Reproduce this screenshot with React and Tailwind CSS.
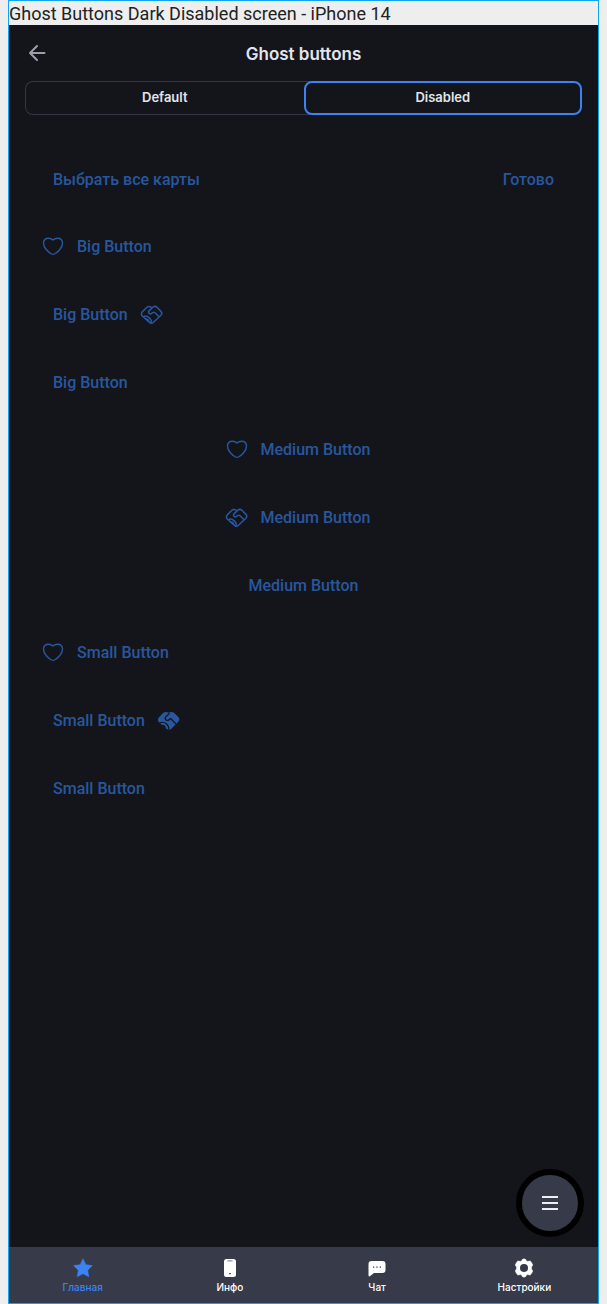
import React from "react";

function HeartIcon() {
  return (
    <svg viewBox="0 0 24 24" className="size-6 shrink-0" fill="none" stroke="currentColor" strokeWidth="1.4" strokeLinejoin="round" aria-hidden="true">
      <path d="M12 4.900C10.700 3.700 9.200 3.200 7.500 3.200C4.500 3.200 2.500 5.300 2.500 8.300C2.500 12.900 7.500 17.400 10.600 19C11.500 19.500 12.500 19.500 13.400 19C16.500 17.400 21.500 12.900 21.500 8.300C21.500 5.300 19.500 3.200 16.500 3.200C14.800 3.200 13.300 3.700 12 4.900Z" />
    </svg>
  );
}

function HandshakeIcon() {
  return (
    <svg viewBox="0 0 24 24" className="size-6 shrink-0" fill="none" stroke="currentColor" strokeWidth="1.5" strokeLinecap="round" strokeLinejoin="round" aria-hidden="true">
      <path d="M11.500 4.500C9.900 3.300 7.800 3.300 6.400 4.700L2.500 8.600C1.200 10 1.200 11.800 2.500 13.200L9.800 19.600C10.900 20.500 12.200 20.500 13.200 19.500L20.700 12.500C22.100 11.100 22.100 9.500 20.700 8.100L17.200 4.500C15.900 3.200 13.900 3.200 12.600 4.500L9 7.900C8.300 8.600 8.300 9.700 9.100 10.400C9.900 11.100 11 11 11.700 10.300L12.800 9.500C13.500 9 14.300 9.100 15 9.700L18.800 13.600" />
      <path d="M3.500 13.700C4.900 12.900 6.600 13 7.900 13.800C10.100 15.100 11.500 17.200 11.300 19.500M6.200 16C7.500 16.100 8.500 17 8.700 18.300" />
    </svg>
  );
}

function HandshakeSolidIcon() {
  return (
    <svg viewBox="0 0 24 24" className="size-6 shrink-0" aria-hidden="true">
      <path d="M6 4.100C7.700 2.700 9.900 2.700 11.700 3.700C13.500 2.700 15.900 2.700 17.500 4.200L21.300 8C22.800 9.500 22.700 11.300 21.300 12.700L14 20C12.700 21.200 10.900 21.200 9.700 20.100L2 13.300C.6 11.900 .6 9.600 2 8.200Z" fill="currentColor" />
      <path d="M12.500 4.300L8.800 7.900C8 8.800 8 10 8.900 10.800C9.800 11.600 11.200 11.500 12 10.800L13.600 9.500L19 15M2.600 13.800C5.300 12.800 7.500 13.200 9.300 14.700C11.300 16.300 12 18.300 11.700 20.900M5.500 16.400C7 16.400 8 17.300 8.200 18.800" fill="none" stroke="#14151a" strokeWidth="1.200" strokeLinejoin="round" />
    </svg>
  );
}

const rows = [
  { align: "start", label: "Big Button", left: HeartIcon },
  { align: "start", label: "Big Button", right: HandshakeIcon },
  { align: "start", label: "Big Button" },
  { align: "center", label: "Medium Button", left: HeartIcon },
  { align: "center", label: "Medium Button", left: HandshakeIcon },
  { align: "center", label: "Medium Button" },
  { align: "start", label: "Small Button", left: HeartIcon },
  { align: "start", label: "Small Button", right: HandshakeSolidIcon },
  { align: "start", label: "Small Button" },
];

function GhostButton({ label, left: Left, right: Right }) {
  const height = Left || Right ? "h-11" : "h-[43px]";
  return (
    <button type="button" disabled className={`flex items-center text-base font-medium text-[#28579f] ${height}`}>
      {Left && <Left />}
      <span className="px-3">{label}</span>
      {Right && <Right />}
    </button>
  );
}

const tabs = [
  {
    label: "Главная",
    active: true,
    icon: <path d="M10 .8L12.900 6.700L19.400 7.600L14.700 12.200L15.800 18.700L10 15.700L4.200 18.700L5.300 12.200L.6 7.600L7.100 6.700Z" fill="currentColor" stroke="currentColor" strokeWidth=".5" strokeLinejoin="round" />,
  },
  {
    label: "Инфо",
    icon: (
      <>
        <rect x="4" y="1" width="12" height="18" rx="2.500" fill="currentColor" />
        <rect x="7.300" y="2.200" width="5.400" height="1.200" rx=".6" fill="#8f919b" />
        <rect x="9.200" y="15" width="1.600" height="1.300" fill="#373a49" />
      </>
    ),
  },
  {
    label: "Чат",
    icon: (
      <>
        <path d="M4.500 3H15.500C17.500 3 18.500 4 18.500 6V12C18.500 14 17.500 15 15.500 15H7L3.200 18.100C2.200 18.800 1.500 18.500 1.500 17.300V6C1.500 4 2.500 3 4.500 3Z" fill="currentColor" />
        <path d="M6 8.400H7.300V9.700H6ZM9.300 8.400H10.600V9.700H9.300ZM12.700 8.400H14V9.700H12.700Z" fill="#373a49" />
      </>
    ),
  },
  {
    label: "Настройки",
    icon: (
      <>
        <path d="M8.200 1.800C8.400 1.200 8.800 1 9.300 1H10.700C11.200 1 11.600 1.200 11.800 1.800C12.200 3 13.200 3.600 14.500 3.300L15.600 3.100C16.200 3 16.600 3.200 16.900 3.700L18.500 6.400C18.800 6.900 18.700 7.300 18.300 7.800C17 9.200 17 10.800 18.300 12.200C18.700 12.700 18.800 13.100 18.500 13.600L16.900 16.300C16.600 16.800 16.200 17 15.600 16.900L14.500 16.700C13.200 16.400 12.200 17 11.800 18.200C11.600 18.800 11.200 19 10.700 19H9.300C8.800 19 8.400 18.800 8.200 18.200C7.800 17 6.800 16.400 5.500 16.700L4.400 16.900C3.800 17 3.400 16.800 3.100 16.300L1.500 13.600C1.200 13.100 1.300 12.700 1.700 12.200C3 10.800 3 9.200 1.700 7.800C1.300 7.300 1.200 6.900 1.500 6.400L3.100 3.700C3.400 3.200 3.800 3 4.400 3.100L5.500 3.300C6.800 3.600 7.800 3 8.200 1.800Z" fill="currentColor" stroke="currentColor" strokeWidth=".6" />
        <circle cx="10" cy="10" r="4" fill="#373a49" />
      </>
    ),
  },
];

export default function App() {
  return (
    <div className="min-h-screen bg-[#eeeeee] px-2 font-['Roboto',sans-serif] flex flex-col">
      <div className="flex grow flex-col border border-[#0da5f3]">
        <p className="h-6 text-lg leading-[26px] text-[#222222]">
          Ghost Buttons Dark Disabled screen - iPhone 14
        </p>
        <div className="relative flex grow flex-col bg-[#14151a]">
          <header className="grid h-14 grid-cols-[40px_1fr_40px] items-center px-4">
            <button type="button" aria-label="Back" className="text-[#9c9faa]">
              <svg viewBox="0 0 24 24" className="size-6" fill="none" stroke="currentColor" strokeWidth="2" strokeLinecap="round" strokeLinejoin="round" aria-hidden="true">
                <path d="M19.500 12H5M12 5L5 12L12 19" />
              </svg>
            </button>
            <h1 className="pt-1 text-center font-['Inter',sans-serif] text-[17px] font-semibold text-[#e2e5ee]">Ghost buttons</h1>
          </header>

          <div className="mx-4 grid h-[34px] grid-cols-2 rounded-lg font-['Inter',sans-serif] text-[13px] font-semibold text-[#e2e5ee]">
            <button type="button" className="-mr-2 rounded-l-lg border border-r-0 border-[#343643] pr-2 pb-px">Default</button>
            <button type="button" aria-pressed="true" className="z-10 rounded-lg border-2 border-[#3c82f3] bg-[#14151a] pb-px">Disabled</button>
          </div>

          <main className="flex flex-col gap-6 px-8 pt-[43px] pb-28">
            <div className="flex justify-between">
              <GhostButton label="Выбрать все карты" />
              <GhostButton label="Готово" />
            </div>
            {rows.map(({ align, ...button }, i) => (
              <div key={i} className={align === "center" ? "flex justify-center" : "flex justify-start"}>
                <GhostButton {...button} />
              </div>
            ))}
          </main>

          <button type="button" aria-label="Menu" className="absolute right-3.5 bottom-[66px] flex size-[68px] items-center justify-center rounded-full border-[6px] border-black bg-[#373a49] text-[#eceef4]">
            <svg viewBox="0 0 16 16" className="size-4" stroke="currentColor" strokeWidth="2" aria-hidden="true">
              <path d="M0 2H16M0 8H16M0 14H16" />
            </svg>
          </button>

          <nav className="mt-auto grid h-14 grid-cols-4 bg-[#373a49] font-['Inter',sans-serif] text-[10px] leading-3 font-medium">
            {tabs.map(({ label, active, icon }) => (
              <a key={label} href="#" className={active ? "flex flex-col items-center gap-[3px] pt-[11px] text-[#3c82f3]" : "flex flex-col items-center gap-[3px] pt-[11px] text-white"}>
                <svg viewBox="0 0 20 20" className="size-5" aria-hidden="true">{icon}</svg>
                {label}
              </a>
            ))}
          </nav>
        </div>
      </div>
    </div>
  );
}
